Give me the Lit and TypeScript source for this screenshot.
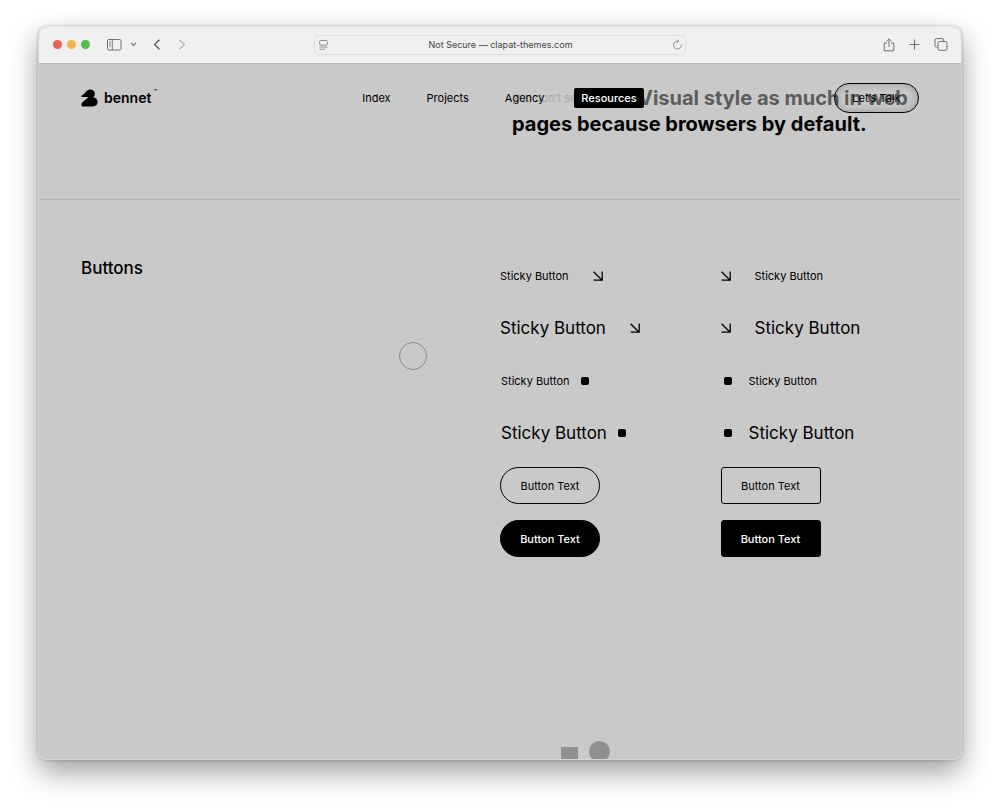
import { LitElement, html, css } from "lit";
import { customElement } from "lit/decorators.js";

const arrow = html`<svg class="arrow" viewBox="0 0 10 10" aria-hidden="true">
  <path d="M0.6 0.8L8.8 9M9.2 0.6V9.2H0.6" fill="none" stroke="#000" stroke-width="1.3" />
</svg>`;
const square = html`<span class="square" aria-hidden="true"></span>`;

@customElement("app-root")
export class AppRoot extends LitElement {
  static styles = css`
    :host {
      display: block;
      box-sizing: border-box;
      min-height: 100vh;
      padding: 26px 38px 51px;
      background: #fff;
      color: #000;
      font-family: Inter, "Liberation Sans", sans-serif;
      overflow: hidden;
    }
    * { box-sizing: border-box; }
    svg { display: block; flex: none; }
    button, input { font: inherit; color: inherit; margin: 0; }
    button { background: none; border: 0; padding: 0; cursor: pointer; }
    a { color: inherit; text-decoration: none; }

    .window {
      position: relative;
      display: flex;
      flex-direction: column;
      min-height: calc(100vh - 77px);
      border: 1px solid #d4d4d4;
      border-top-color: #e6e6e6;
      border-radius: 9px;
      overflow: hidden;
      background: #c9c9c9;
    }
    .shadow {
      border-radius: 9px;
      box-shadow: 0 12px 28px rgba(0, 0, 0, 0.38), 0 0 3px rgba(0, 0, 0, 0.25);
    }

    .toolbar {
      display: grid;
      grid-template-columns: 1fr 372px 1fr;
      align-items: center;
      height: 37px;
      padding-bottom: 1px;
      background: #f0f0f0;
      border-bottom: 1px solid #b8b8b8;
    }
    .left { display: flex; align-items: center; padding-left: 14px; }
    .lights { display: flex; gap: 5px; margin-right: 17px; }
    .light { width: 9px; height: 9px; border-radius: 50%; background: #e8605a; }
    .light.yellow { background: #f2b743; }
    .light.green { background: #58bd4c; }
    .chevron { margin-left: 8px; }
    .back { margin-left: 16px; }
    .forward { margin-left: 17px; }
    .address {
      display: flex;
      align-items: center;
      height: 20px;
      padding: 0 3px 0 4px;
      border: 1px solid #dedede;
      border-radius: 5px;
    }
    .url {
      flex: 1;
      min-width: 0;
      border: 0;
      padding: 0;
      background: none;
      font-size: 9px;
      text-align: center;
      color: #444;
      outline: none;
    }
    .right { display: flex; justify-content: flex-end; align-items: center; gap: 14px; padding-right: 13px; }

    .page { position: relative; flex: 1; display: flex; flex-direction: column; }
    .header {
      position: absolute;
      top: 19px;
      left: 42px;
      right: 42px;
      display: grid;
      grid-template-columns: 1fr auto 1fr;
      align-items: center;
      height: 30px;
      z-index: 2;
      font-size: 11px;
    }
    .brand { display: flex; align-items: center; font-size: 14px; font-weight: 600; line-height: 18px; }
    .brand svg { margin-right: 6px; }
    .tm { align-self: flex-start; margin-left: 2px; font-size: 6px; line-height: 6px; }
    .nav { display: flex; gap: 24px; }
    .nav a { padding: 0 6px; line-height: 20px; }
    .nav a.active { padding: 0 7px; background: #000; color: #fff; font-weight: 500; border-radius: 2px; }
    .talk {
      justify-self: end;
      width: 85px;
      height: 30px;
      border: 1px solid #000;
      border-radius: 15px;
      box-shadow: inset 0 0 8px rgba(0, 0, 0, 0.25);
    }

    .hero {
      display: grid;
      grid-template-columns: 1fr 1fr;
      padding: 21px 0 62px;
      border-bottom: 1px solid #b7b7b7;
    }
    .statement {
      grid-column: 2;
      margin: 0;
      padding-left: 12px;
      font-size: 20px;
      line-height: 26px;
      font-weight: 700;
      white-space: nowrap;
    }
    .first { display: flex; color: #5c5c5c; }
    .aside { flex: none; width: 126px; font-size: 11px; font-weight: 400; color: #aaa; }

    .demo { display: grid; grid-template-columns: calc(50% + 10px) 1fr; padding: 57px 20px 0 0; }
    .title { margin: 0; padding-left: 42px; font-size: 17px; line-height: 22px; font-weight: 500; }
    .demo { grid-template-columns: minmax(0, 461fr) minmax(0, 441fr); }
    .grid { display: grid; grid-template-columns: 1fr 1fr; row-gap: 16px; justify-items: start; }
    .sticky { display: flex; align-items: center; height: 37px; font-size: 11px; gap: 24px; }
    .sticky.big { height: 36px; font-size: 17px; }
    .sticky.dot { gap: 11px; padding-left: 1px; }
    .sticky.lead.dot { gap: 17px; padding-left: 3px; }
    .arrow { width: 10px; height: 10px; }
    .square { width: 8px; height: 8px; border-radius: 2px; background: #000; }
    .btn { width: 100px; height: 37px; border: 1px solid #000; border-radius: 19px; font-size: 11px; }
    .btn.box { border-radius: 3px; }
    .btn.solid { background: #000; color: #fff; font-weight: 500; }

    .shapes { display: flex; gap: 11px; margin-top: auto; height: 18px; padding-left: calc(50% + 61px); overflow: hidden; }
    .rect { width: 17px; height: 14px; margin-top: 6px; background: #909090; }
    .circle { width: 21px; height: 21px; flex: none; border-radius: 50%; background: #909090; }
    .cursor {
      position: absolute;
      left: 360px;
      top: 278px;
      width: 28px;
      height: 28px;
      border: 1px solid #8a8a8a;
      border-radius: 50%;
      pointer-events: none;
    }
  `;

  private sticky(big: boolean, dot: boolean, lead: boolean) {
    const mark = dot ? square : arrow;
    const cls = `sticky${big ? " big" : ""}${dot ? " dot" : ""}${lead ? " lead" : ""}`;
    return html`<button class=${cls}>${lead ? mark : ""}<span>Sticky Button</span>${lead ? "" : mark}</button>`;
  }

  render() {
    return html`<div class="shadow"><div class="window">
      <div class="toolbar">
        <div class="left">
          <div class="lights"><span class="light"></span><span class="light yellow"></span><span class="light green"></span></div>
          <button aria-label="Sidebar"><svg width="15" height="12" viewBox="0 0 15 12" fill="none" stroke="#707070"><rect x="0.5" y="0.5" width="13.5" height="10.5" rx="1.5" /><path d="M5.3 0.5V11M2 3H3.7M2 5H3.7M2 7H3.7" stroke-width="0.9" /></svg></button>
          <button class="chevron" aria-label="Tab groups"><svg width="7" height="5" viewBox="0 0 7 5" fill="none" stroke="#777" stroke-width="1.1"><path d="M1 1L3.5 3.5L6 1" /></svg></button>
          <button class="back" aria-label="Back"><svg width="8" height="11" viewBox="0 0 8 11" fill="none" stroke="#555" stroke-width="1.2"><path d="M6.5 0.8L1.5 5.5L6.5 10.2" /></svg></button>
          <button class="forward" aria-label="Forward"><svg width="8" height="11" viewBox="0 0 8 11" fill="none" stroke="#aaa" stroke-width="1.1"><path d="M1.5 0.8L6.5 5.5L1.5 10.2" /></svg></button>
        </div>
        <div class="address">
          <svg width="9" height="10" viewBox="0 0 9 10" fill="none" stroke="#858585" stroke-width="0.9"><rect x="0.7" y="0.5" width="7.6" height="4.6" rx="0.8" /><path d="M0.5 7H8.5M0.5 9.2H6" /></svg>
          <input class="url" aria-label="Address" value="Not Secure — clapat-themes.com" />
          <button aria-label="Reload"><svg width="9" height="11" viewBox="0 0 9 11" fill="none" stroke="#808080" stroke-width="0.9"><path d="M5 2.2A3.9 3.9 0 1 0 8.3 5.6M3.7 0.4L5.7 2.3L3.7 4.2" /></svg></button>
        </div>
        <div class="right">
          <button aria-label="Share"><svg width="12" height="14" viewBox="0 0 12 14" fill="none" stroke="#707070"><path d="M4 5H1.2V12.8H10.8V5H8M6 9V1M3.6 3.2L6 0.8L8.4 3.2" /></svg></button>
          <button aria-label="New tab"><svg width="11" height="11" viewBox="0 0 11 11" stroke="#707070" stroke-width="1.1"><path d="M5.5 0.5V10.5M0.5 5.5H10.5" /></svg></button>
          <button aria-label="Tab overview"><svg width="14" height="13" viewBox="0 0 14 13" fill="none" stroke="#707070"><rect x="4" y="3.5" width="9" height="8.8" rx="1.5" /><path d="M3.7 9.2H2.5Q1 9.2 1 7.7V2Q1 0.6 2.5 0.6H8.2Q9.7 0.6 9.7 2V3.3" /></svg></button>
        </div>
      </div>
      <div class="page">
        <header class="header">
          <a class="brand" href="#"><svg width="17" height="18" viewBox="0 0 17 18"><path d="M2.3 5.4L6.2 1.6C7.2 0.7 8.4 0.4 9.6 0.5C12.2 0.7 13.9 2.5 13.9 4.8C13.9 6.2 13.3 7.3 12.2 8.2C14.8 8.4 16.7 10.4 16.7 13C16.7 15.7 14.6 17.4 11.8 17.4H1.4L0.4 16.3C0.3 15 0.8 13.8 1.8 12.9L7.6 8H0.5V6.8Z" /></svg>bennet<span class="tm">™</span></a>
          <nav class="nav"><a href="#">Index</a><a href="#">Projects</a><a href="#">Agency</a><a class="active" href="#">Resources</a></nav>
          <button class="talk">Let’s Talk</button>
        </header>
        <section class="hero">
          <h2 class="statement"><span class="first"><span class="aside">You don’t see</span>Visual style as much in web</span>pages because browsers by default.</h2>
        </section>
        <section class="demo">
          <h3 class="title">Buttons</h3>
          <div class="grid">
            ${this.sticky(false, false, false)}${this.sticky(false, false, true)}
            ${this.sticky(true, false, false)}${this.sticky(true, false, true)}
            ${this.sticky(false, true, false)}${this.sticky(false, true, true)}
            ${this.sticky(true, true, false)}${this.sticky(true, true, true)}
            <button class="btn">Button Text</button><button class="btn box">Button Text</button>
            <button class="btn solid">Button Text</button><button class="btn box solid">Button Text</button>
          </div>
        </section>
        <div class="shapes"><span class="rect"></span><span class="circle"></span></div>
        <span class="cursor"></span>
      </div>
    </div></div>`;
  }
}
